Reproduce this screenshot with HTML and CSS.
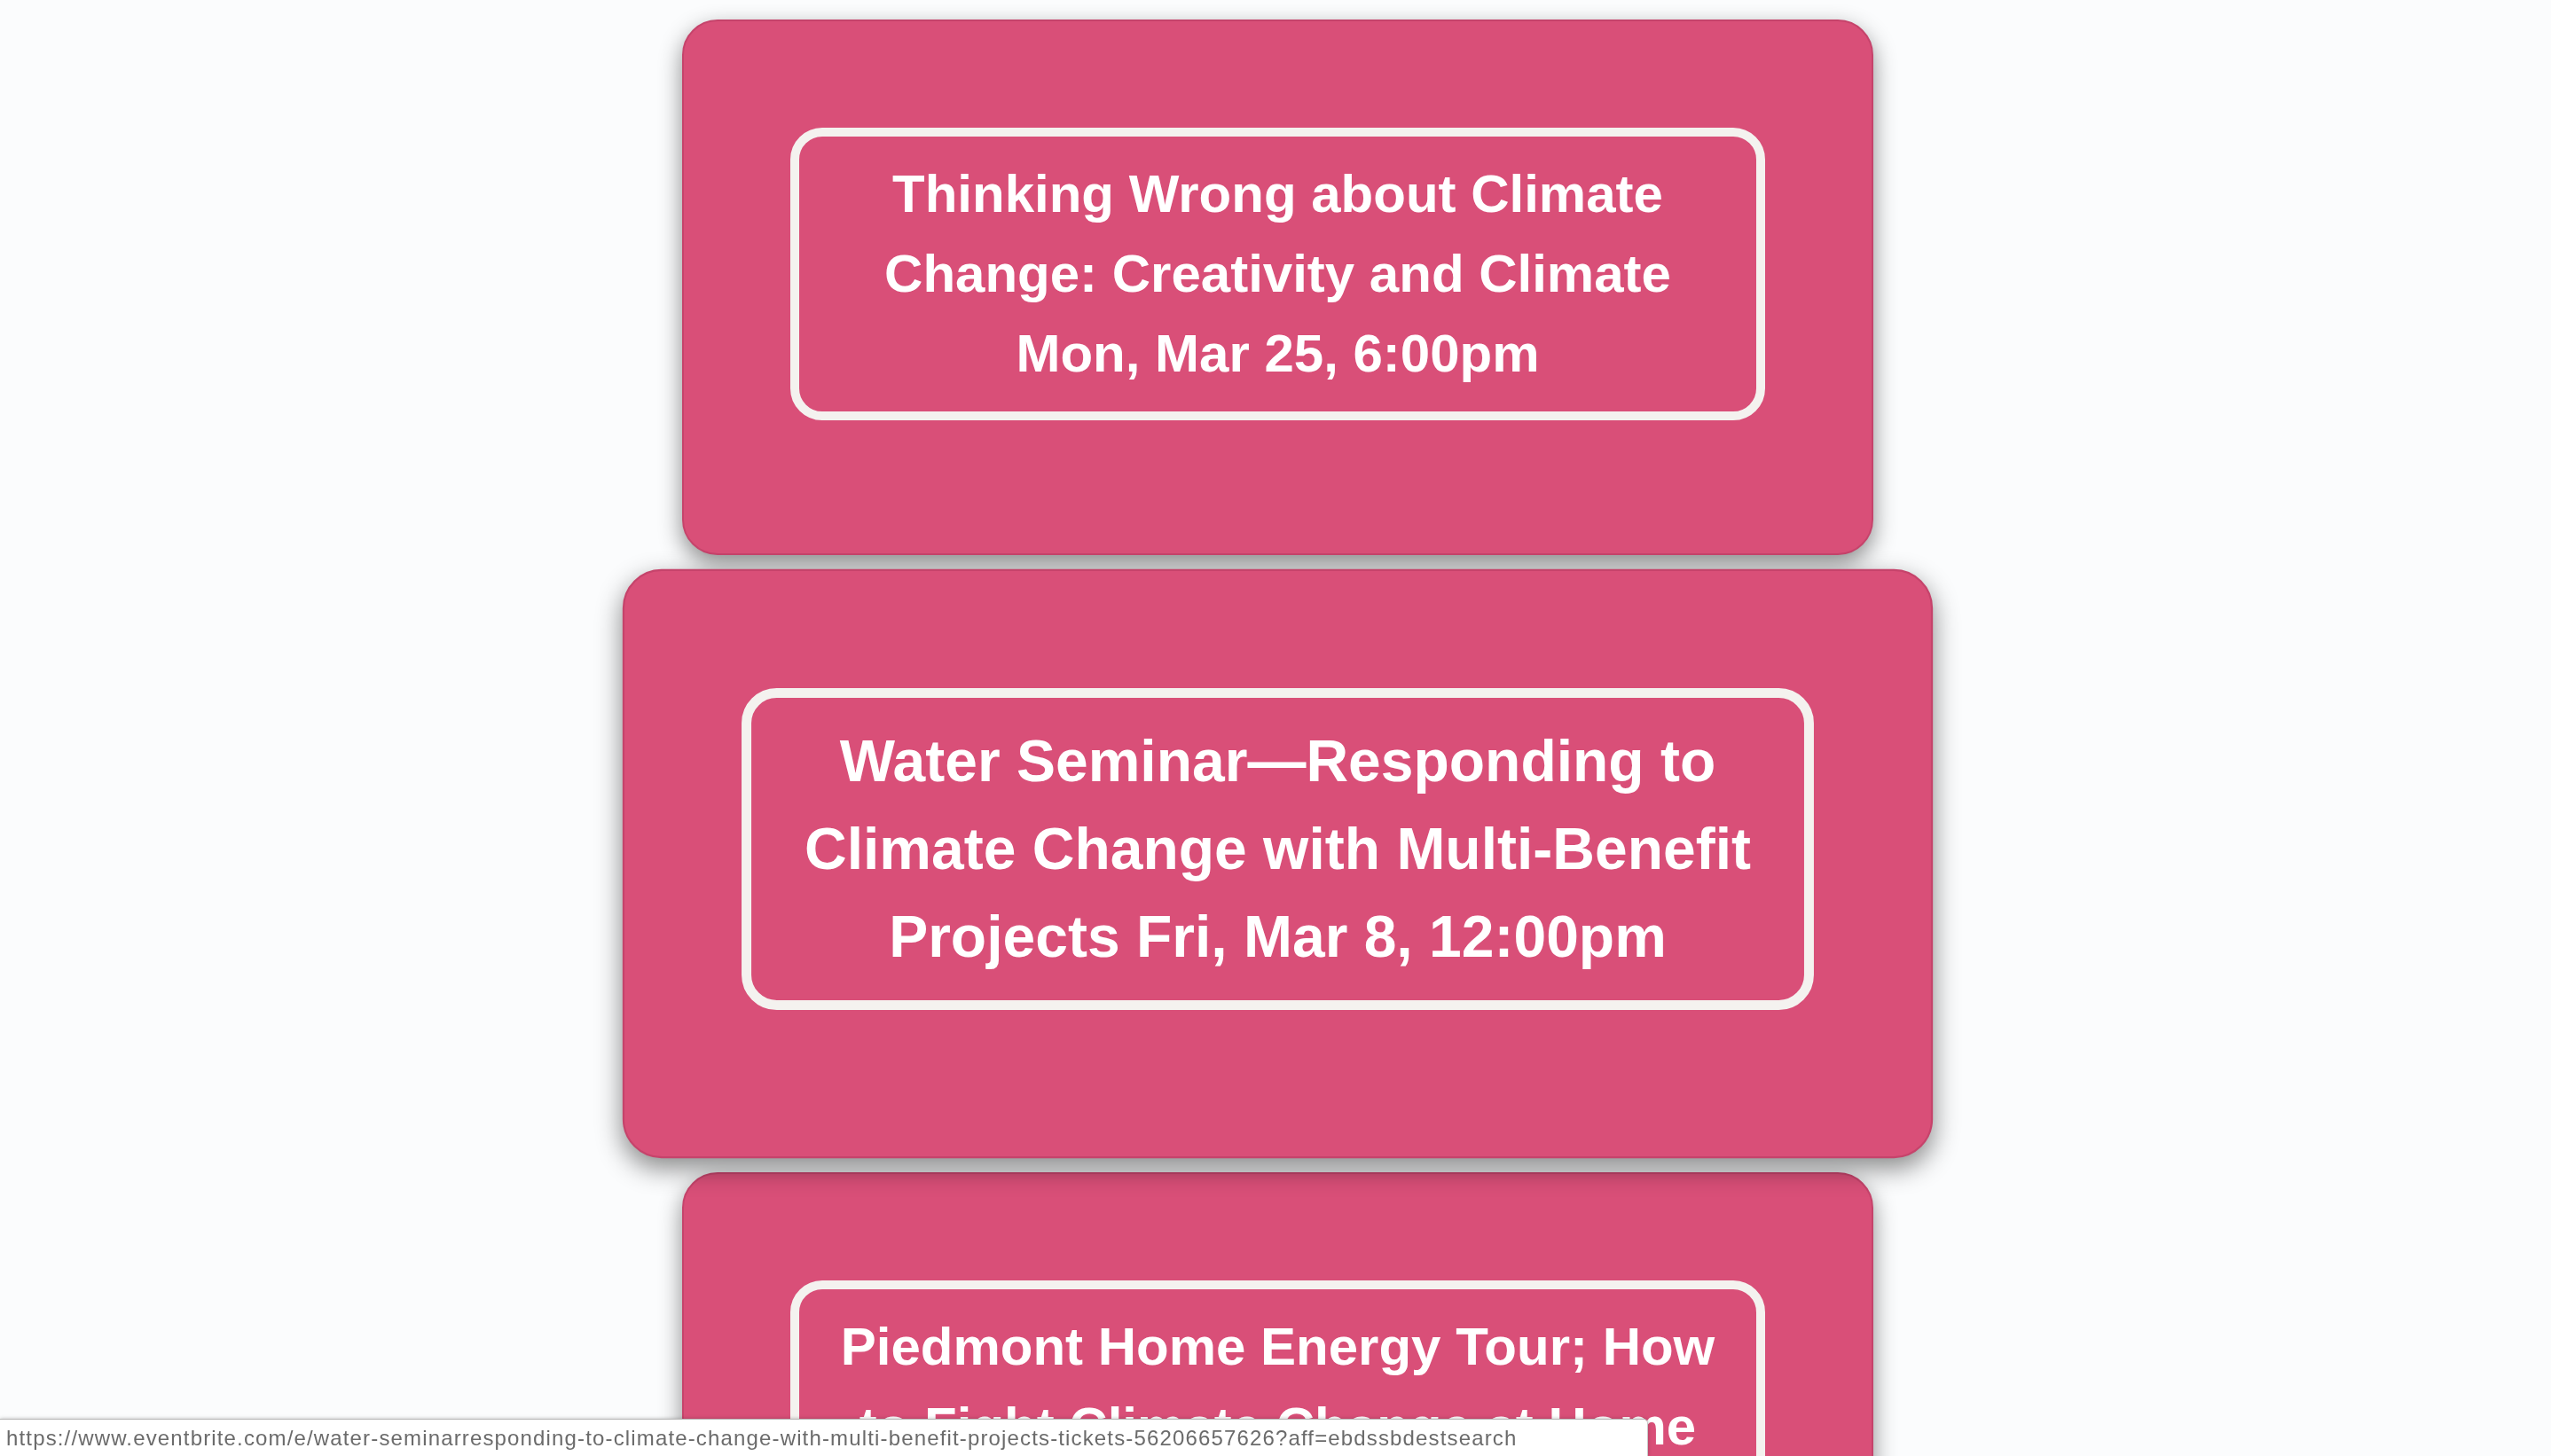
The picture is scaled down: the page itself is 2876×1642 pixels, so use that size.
FILE: index.html
```html
<!DOCTYPE html>
<html lang="en">
<head>
<meta charset="utf-8">
<title>Climate Events</title>
<link rel="stylesheet" href="styles.css">
</head>
<body>
<main class="events">
  <a class="card" href="#">
    <div class="card-box">Thinking Wrong about Climate Change: Creativity and Climate Mon, Mar 25, 6:00pm</div>
  </a>
  <a class="card card-hover" href="#">
    <div class="card-box">Water Seminar—Responding to Climate Change with Multi-Benefit Projects Fri, Mar 8, 12:00pm</div>
  </a>
  <a class="card" href="#">
    <div class="card-box">Piedmont Home Energy Tour; How to Fight Climate Change at Home Sat, Mar 16, 10:00am</div>
  </a>
</main>
<div class="status-bubble">https://www.eventbrite.com/e/water-seminarresponding-to-climate-change-with-multi-benefit-projects-tickets-56206657626?aff=ebdssbdestsearch</div>
</body>
</html>
```
FILE: styles.css
```css
html, body {
  margin: 0;
  padding: 0;
  height: 100%;
  overflow: hidden;
}

body {
  background: #fbfcfd;
  font-family: "Liberation Sans", Arial, Helvetica, sans-serif;
}

.events {
  display: flex;
  flex-direction: column;
  align-items: center;
  gap: 46px;
  padding: 22px 0 0 5px;
}

.card {
  box-sizing: border-box;
  width: 1343px;
  flex: none;
  background: #d94f78;
  border: 2px solid #c6436b;
  border-radius: 40px;
  padding: 120px 120px 150px;
  box-shadow: 0 10px 26px rgba(0, 0, 0, 0.45);
  text-decoration: none;
  display: block;
}

.card-hover {
  transform: scale(1.1);
  position: relative;
  z-index: 1;
}

.card-box {
  border: 10px solid #f4f2ef;
  border-radius: 36px;
  padding: 20px;
  color: #ffffff;
  font-weight: 700;
  font-size: 60px;
  line-height: 90px;
  text-align: center;
}

.status-bubble {
  position: fixed;
  left: 0;
  bottom: 0;
  box-sizing: border-box;
  width: 1858px;
  height: 42px;
  padding: 6px 0 0 7px;
  background: #ffffff;
  border-top: 1px solid #b8b8b8;
  border-right: 1px solid #c8c8c8;
  border-top-right-radius: 5px;
  box-shadow: 0 0 4px rgba(0, 0, 0, 0.25);
  color: #6b6b6b;
  font-size: 24px;
  letter-spacing: 1.15px;
  line-height: 30px;
  white-space: nowrap;
  z-index: 5;
}
```
